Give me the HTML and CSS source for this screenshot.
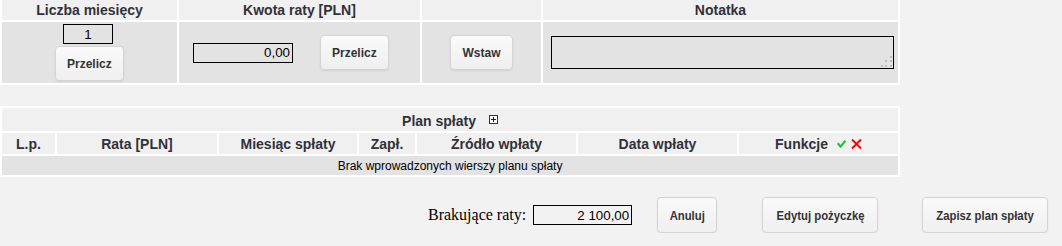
FILE: index.html
```html
<!DOCTYPE html>
<html lang="pl">
<head>
<meta charset="utf-8">
<title>Plan spłaty</title>
<link rel="stylesheet" href="styles.css">
</head>
<body>
<table class="grid grid-top">
  <colgroup>
    <col class="c-months"><col class="c-amount"><col class="c-insert"><col class="c-note">
  </colgroup>
  <thead>
    <tr>
      <th>Liczba miesięcy</th>
      <th>Kwota raty [PLN]</th>
      <th></th>
      <th>Notatka</th>
    </tr>
  </thead>
  <tbody>
    <tr class="form-row">
      <td class="cell-months">
        <input class="field field-months" type="text" value="1">
        <button class="btn btn-top btn-block" type="button">Przelicz</button>
      </td>
      <td>
        <div class="amount-wrap">
          <input class="field field-amount" type="text" value="0,00">
          <button class="btn btn-top" type="button">Przelicz</button>
        </div>
      </td>
      <td class="cell-center">
        <button class="btn btn-top" type="button">Wstaw</button>
      </td>
      <td>
        <textarea class="note"></textarea>
      </td>
    </tr>
  </tbody>
</table>

<table class="grid grid-plan">
  <colgroup>
    <col class="p-lp"><col class="p-rate"><col class="p-month"><col class="p-paid"><col class="p-src"><col class="p-date"><col class="p-fn">
  </colgroup>
  <thead>
    <tr class="plan-title">
      <th colspan="7">
        <span class="title-group">Plan spłaty
          <svg class="plus-icon" width="9" height="9" viewBox="0 0 9 9" aria-hidden="true">
            <rect x="0.5" y="0.5" width="8" height="8" fill="#fff" stroke="#333" stroke-width="1"/>
            <path d="M2 4.5H7M4.5 2V7" stroke="#222" stroke-width="1"/>
          </svg>
        </span>
      </th>
    </tr>
    <tr class="plan-head">
      <th>L.p.</th>
      <th>Rata [PLN]</th>
      <th>Miesiąc spłaty</th>
      <th>Zapł.</th>
      <th>Źródło wpłaty</th>
      <th>Data wpłaty</th>
      <th><span class="fn-group">Funkcje
        <svg class="ok-icon" width="9" height="8" viewBox="0 0 9 8" aria-hidden="true">
          <path d="M0.8 3.2L3.6 6.6L8.4 0.8" fill="none" stroke="#1fc43a" stroke-width="2.2"/>
        </svg>
        <svg class="x-icon" width="11" height="10" viewBox="0 0 11 10" aria-hidden="true">
          <path d="M1 0.5L10 9.5M10 0.5L1 9.5" stroke="#f00" stroke-width="2"/>
        </svg>
      </span></th>
    </tr>
  </thead>
  <tbody>
    <tr class="plan-empty">
      <td colspan="7">Brak wprowadzonych wierszy planu spłaty</td>
    </tr>
  </tbody>
</table>

<div class="footer">
  <label class="missing-label" for="missing">Brakujące raty:</label>
  <input id="missing" class="field field-missing" type="text" value="2 100,00">
  <button class="btn btn-bottom btn-cancel" type="button"><span class="narrow">Anuluj</span></button>
  <button class="btn btn-bottom btn-edit" type="button"><span class="narrow">Edytuj pożyczkę</span></button>
  <button class="btn btn-bottom btn-save" type="button"><span class="narrow">Zapisz plan spłaty</span></button>
</div>
</body>
</html>
```

FILE: styles.css
```css
body {
  margin: 0;
  background: #f2f2f2;
  font-family: "Liberation Sans", Arial, sans-serif;
  color: #333;
}

/* buttons */
.btn {
  box-sizing: border-box;
  border: 1px solid #d4d4d4;
  border-radius: 4px;
  background: linear-gradient(#fafafa, #efefef);
  box-shadow: 0 1px 2px rgba(0, 0, 0, 0.08);
  color: #333;
  font-weight: bold;
  cursor: pointer;
  white-space: nowrap;
}

.btn-top {
  height: 35px;
  padding: 0 11px;
  font-family: "Liberation Sans", Arial, sans-serif;
  font-size: 12px;
}

.btn-bottom {
  flex: none;
  height: 36px;
  padding: 0;
  font-family: "Liberation Sans", Arial, sans-serif;
  font-size: 13px;
  text-align: center;
}

.narrow {
  display: inline-block;
  transform: scaleX(0.87);
  transform-origin: center;
}

.grid {
  width: 900px;
  table-layout: fixed;
  border-collapse: separate;
  border-spacing: 2px;
  background: #fff;
}

.grid th,
.grid td {
  padding: 0;
}

.grid th {
  background: #f0f0f0;
  font-size: 14px;
  font-weight: bold;
  color: #31313a;
  text-align: center;
  vertical-align: middle;
}

.grid td {
  background: #e3e3e3;
  vertical-align: middle;
}

/* top table */
.grid-top {
  margin-top: -2px;
}

.c-months { width: 175px; }
.c-amount { width: 241px; }
.c-insert { width: 119px; }
.c-note { width: 355px; }

.grid-top thead th {
  height: 20px;
}

.form-row td {
  height: 61px;
}

.cell-months {
  text-align: center;
}

.cell-center {
  text-align: center;
}

.field {
  box-sizing: border-box;
  height: 20px;
  border: 1px solid #000;
  background: transparent;
  font-family: "Liberation Sans", Arial, sans-serif;
  font-size: 13.333px;
  color: #000;
  padding: 0 2px;
  margin: 0;
  outline: none;
}

.field-months {
  display: block;
  width: 50px;
  margin: 0 0 0 61px;
  text-align: center;
}

.btn-block {
  display: block;
  margin: 2px 0 0 53px;
}

.amount-wrap {
  display: flex;
  align-items: center;
  gap: 27px;
  padding-left: 14px;
}

.field-amount {
  width: 100px;
  text-align: right;
}

.note {
  display: block;
  box-sizing: border-box;
  width: 343px;
  height: 33px;
  margin: 0 0 0 8px;
  border: 1px solid #000;
  resize: none;
  outline: none;
  background-color: transparent;
  background-image:
    linear-gradient(#bdbdbd, #bdbdbd),
    linear-gradient(#bdbdbd, #bdbdbd),
    linear-gradient(#bdbdbd, #bdbdbd),
    linear-gradient(#bdbdbd, #bdbdbd),
    linear-gradient(#bdbdbd, #bdbdbd),
    linear-gradient(#bdbdbd, #bdbdbd);
  background-size: 2px 2px;
  background-repeat: no-repeat;
  background-position:
    right 1px bottom 1px,
    right 6px bottom 1px,
    right 10px bottom 1px,
    right 1px bottom 6px,
    right 6px bottom 6px,
    right 1px bottom 10px;
}

/* plan table */
.grid-plan {
  margin-top: 21px;
}

.p-lp { width: 53px; }
.p-rate { width: 160px; }
.p-month { width: 138px; }
.p-paid { width: 56px; }
.p-src { width: 159px; }
.p-date { width: 159px; }
.p-fn { width: 159px; }

.plan-title th {
  height: 23px;
}

.title-group {
  display: inline-flex;
  align-items: center;
  gap: 13px;
  padding-top: 2px;
}

.plus-icon {
  display: block;
  margin-top: -3px;
}

.plan-head th {
  height: 21px;
}

.fn-group {
  display: inline-flex;
  align-items: center;
}

.ok-icon {
  display: block;
  margin-left: 9px;
}

.x-icon {
  display: block;
  margin-left: 5px;
}

.plan-empty td {
  height: 19px;
  text-align: center;
  font-size: 12px;
  color: #000;
}

/* footer */
.footer {
  display: flex;
  align-items: center;
  height: 36px;
  margin-top: 20px;
  padding-left: 428px;
  white-space: nowrap;
}

.missing-label {
  flex: none;
  font-family: "Liberation Serif", "Times New Roman", serif;
  font-size: 16px;
  color: #000;
}

.field-missing {
  flex: none;
  width: 99px;
  margin-left: 7px;
  text-align: right;
}

.btn-cancel { width: 60px; margin-left: 25px; }
.btn-edit { width: 116px; margin-left: 45px; }
.btn-save { width: 126px; margin-left: 44px; }
```
